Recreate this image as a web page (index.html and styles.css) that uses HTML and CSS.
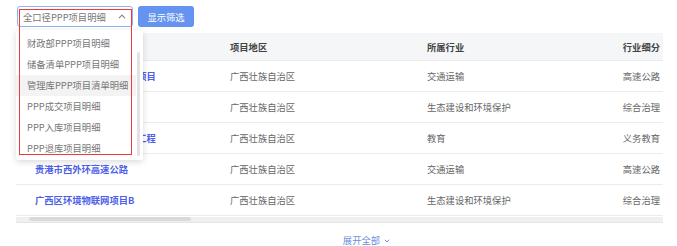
FILE: index.html
```html
<!DOCTYPE html>
<html lang="zh-CN">
<head>
    <meta charset="UTF-8">
    <meta name="viewport" content="width=device-width, initial-scale=1.0">
    <title>PPP项目明细</title>
    <link rel="stylesheet" href="styles.css">
</head>
<body>

    <div class="page">
        <div class="toolbar">
            <div class="select">
                <span class="select-text">全口径PPP项目明细</span>
                <svg class="select-arrow" width="8" height="5" viewBox="0 0 8 5"><path d="M1 4.2 L4 1.2 L7 4.2" fill="none" stroke="#888" stroke-width="1.2"/></svg>
            </div>
            <button type="button" class="btn-filter">显示筛选</button>
        </div>

        <div class="table-wrap">
            <table class="grid">
                <thead>
                    <tr>
                        <th class="col-name">项目名称</th>
                        <th class="col-area">项目地区</th>
                        <th class="col-ind">所属行业</th>
                        <th class="col-sub">行业细分</th>
                    </tr>
                </thead>
                <tbody>
                    <tr>
                        <td><a href="#">南宁市那考河水环境治理项目</a></td>
                        <td>广西壮族自治区</td>
                        <td>交通运输</td>
                        <td class="col-sub">高速公路</td>
                    </tr>
                    <tr>
                        <td><a href="#">南宁市生态修复项目</a></td>
                        <td>广西壮族自治区</td>
                        <td>生态建设和环境保护</td>
                        <td class="col-sub">综合治理</td>
                    </tr>
                    <tr>
                        <td><a href="#">桂林市中小学校舍改扩建工程</a></td>
                        <td>广西壮族自治区</td>
                        <td>教育</td>
                        <td class="col-sub">义务教育</td>
                    </tr>
                    <tr>
                        <td><a href="#">贵港市西外环高速公路</a></td>
                        <td>广西壮族自治区</td>
                        <td>交通运输</td>
                        <td class="col-sub">高速公路</td>
                    </tr>
                    <tr>
                        <td><a href="#">广西区环境物联网项目B</a></td>
                        <td>广西壮族自治区</td>
                        <td>生态建设和环境保护</td>
                        <td class="col-sub">综合治理</td>
                    </tr>
                </tbody>
            </table>
            <div class="hscroll"><div class="hscroll-thumb"></div></div>
        </div>

        <div class="more">展开全部 <svg width="6" height="4" viewBox="0 0 6 4"><path d="M0.8 0.8 L3 3 L5.2 0.8" fill="none" stroke="#6d8fe0" stroke-width="1"/></svg></div>

        <!-- open dropdown of the select -->
        <ul class="menu">
            <li>财政部PPP项目明细</li>
            <li>储备清单PPP项目明细</li>
            <li class="hover">管理库PPP项目清单明细</li>
            <li>PPP成交项目明细</li>
            <li>PPP入库项目明细</li>
            <li>PPP退库项目明细</li>
            <span class="menu-scroll"></span>
        </ul>
        <div class="mark"></div>
    </div>

</body>
</html>
```

FILE: styles.css
```css
body {
    margin: 0;
    background: white;
    font-family: "Noto Sans CJK SC", "Noto Sans", sans-serif;
    font-size: 9.3px;
    color: #666;
}
.page {
    position: relative;
    width: 677px;
    height: 246px;
    padding: 6px 14px 0 16px;
    box-sizing: border-box;
}
.toolbar {
    display: flex;
    align-items: center;
    gap: 5px;
    height: 21px;
    padding-left: 1px;
}
.select {
    width: 116px;
    height: 21px;
    box-sizing: border-box;
    border: 1px solid #8fb2f0;
    border-radius: 3px;
    display: flex;
    align-items: center;
    justify-content: space-between;
    padding: 0 6px 0 5px;
    color: #777;
}
.btn-filter {
    width: 56px;
    height: 21px;
    border: none;
    border-radius: 3px;
    background: #6593ef;
    color: white;
    font-family: inherit;
    font-size: 9.3px;
    padding: 0;
}
.table-wrap {
    margin-top: 6px;
    width: 647px;
}
.grid {
    width: 100%;
    border-collapse: collapse;
    table-layout: fixed;
}
.grid th {
    height: 27px;
    background: #f5f6f7;
    color: #444;
    font-weight: bold;
    text-align: left;
    padding: 0;
    border-bottom: 1px solid #ebebeb;
}
.grid td {
    height: 30px;
    padding: 0;
    border-bottom: 1px solid #ebebeb;
}
.col-name { width: 195px; padding-left: 19px !important; }
.grid td:first-child { padding-left: 19px; }
.col-area { width: 197px; }
.col-ind { width: auto; }
.col-sub { width: 80px; text-align: right !important; padding-right: 3px !important; }
.grid a {
    color: #4d5ee8;
    font-weight: bold;
    text-decoration: none;
}
.hscroll {
    height: 5px;
    background: #f0f0f0;
    margin-top: 1px;
    border-bottom: 1px solid #e4e4e4;
}
.hscroll-thumb {
    width: 162px;
    height: 4px;
    margin-left: 13px;
    background: #dadada;
    border-radius: 2px;
}
.more {
    margin-top: 10px;
    text-align: center;
    color: #6d8fe0;
    padding-left: 54px;
}
.more svg {
    vertical-align: middle;
    margin-left: 2px;
}
.menu {
    position: absolute;
    left: 16px;
    top: 30px;
    width: 127px;
    height: 130px;
    margin: 0;
    padding: 3px 0 0;
    list-style: none;
    background: white;
    box-shadow: 0 2px 6px rgba(0, 0, 0, 0.15);
    border-radius: 2px;
    box-sizing: border-box;
}
.menu li {
    height: 21px;
    line-height: 21px;
    padding-left: 11px;
    margin-right: 7px;
    color: #777;
}
.menu li.hover {
    background: #f3f3f3;
}
.menu-scroll {
    position: absolute;
    right: 3px;
    top: 22px;
    width: 3px;
    height: 104px;
    background: #e2e2e2;
    border-radius: 2px;
}
.mark {
    position: absolute;
    left: 19px;
    top: 9px;
    width: 113px;
    height: 146px;
    box-sizing: border-box;
    border: 1.5px solid #f03a3a;
}
```
